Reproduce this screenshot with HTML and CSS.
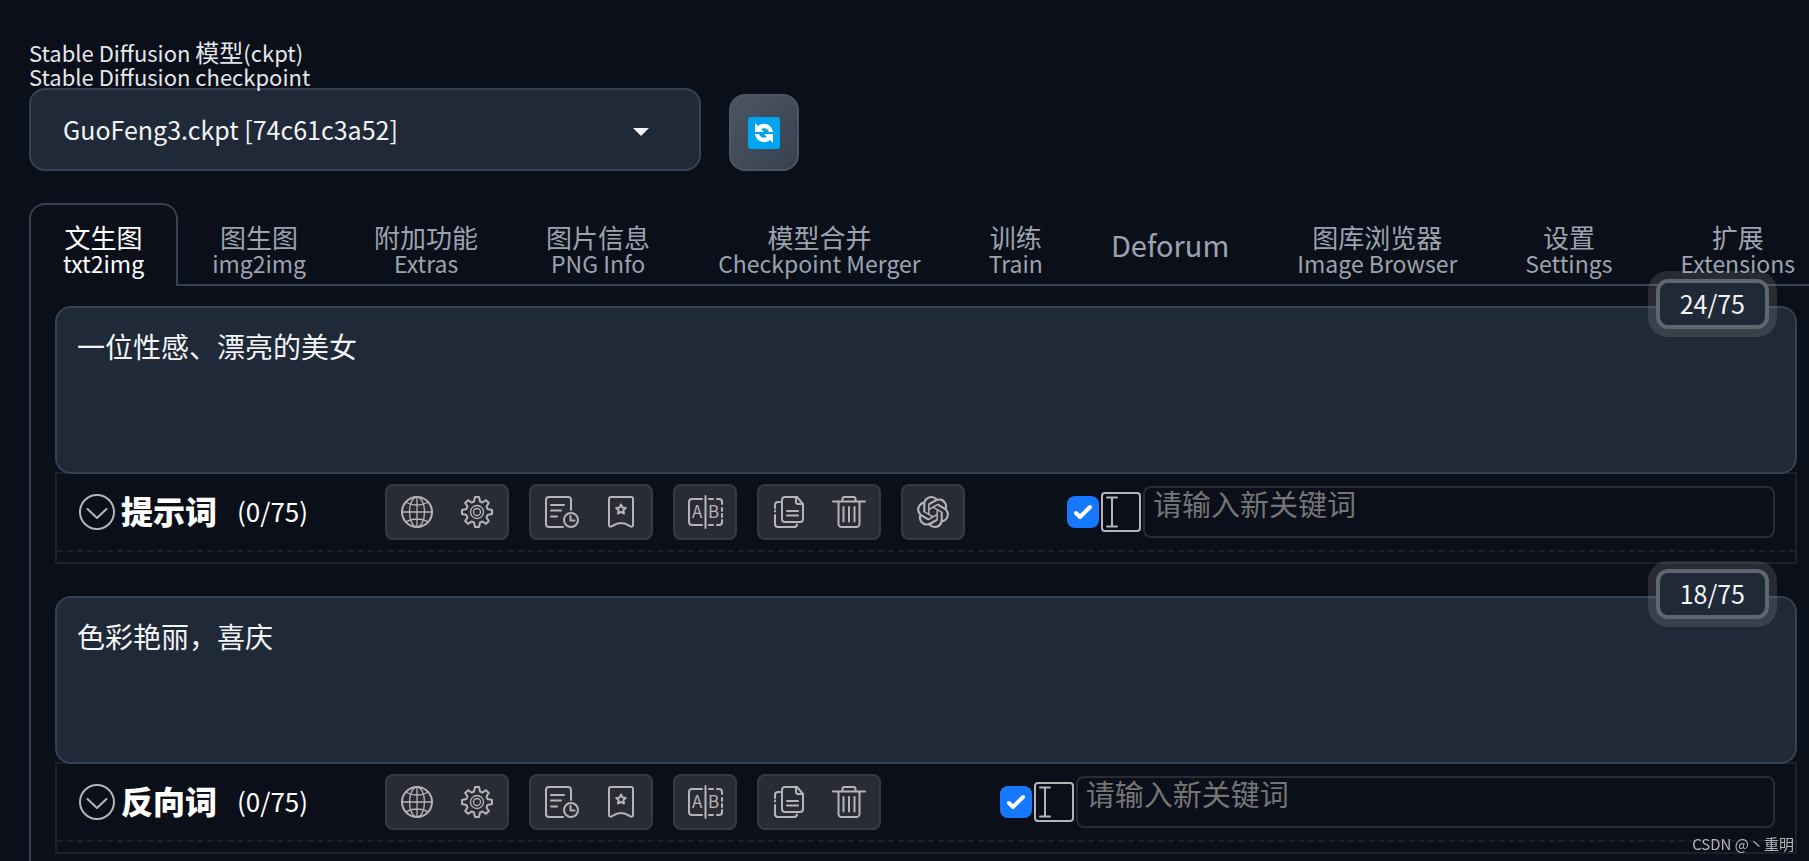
FILE: index.html
```html
<!DOCTYPE html>
<html lang="zh-CN">
<head>
    <meta charset="UTF-8">
    <title>Stable Diffusion</title>
    <link rel="stylesheet" href="styles.css">
</head>
<body>
    <!-- Icon sprite -->
    <svg class="sprite" aria-hidden="true">
        <symbol id="i-refresh" viewBox="0 0 32 32">
            <rect width="32" height="32" rx="3" fill="#00a4ef"/>
            <g fill="#fff">
                <path d="M7 6v9h9l-3-3c4-2 7 0 8 3h4C24 8 16 4 10 9z"/>
                <path d="M25 26v-9h-9l3 3c-4 2-7 0-8-3H7c1 7 9 11 15 6z"/>
            </g>
        </symbol>
        <symbol id="i-chevron" viewBox="0 0 36 36">
            <circle cx="18" cy="18" r="17"/>
            <path d="M8.500 15l9.500 9 9.500-9"/>
        </symbol>
        <symbol id="i-globe" viewBox="0 0 32 32">
            <circle cx="16" cy="16" r="15"/>
            <g stroke-width="1.300">
                <ellipse cx="16" cy="16" rx="7.500" ry="15"/>
                <path d="M16 1v30M1 16h30M5 6c6 4 16 4 22 0M5 26c6-4 16-4 22 0"/>
            </g>
        </symbol>
        <symbol id="i-gear" viewBox="0 0 32 32">
            <path d="M14 1h4l1 4.500 2.500 1L25 4.200 27.800 7l-2.300 3.500 1 2.500 4.500 1v4l-4.500 1-1 2.500 2.300 3.500-2.800 2.800-3.500-2.300-2.500 1-1 4.500h-4l-1-4.500-2.500-1L7 27.800 4.200 25l2.300-3.500-1-2.500L1 18v-4l4.500-1 1-2.500L4.200 7 7 4.200l3.500 2.300 2.500-1z"/>
            <g stroke-width="1.300"><circle cx="16" cy="16" r="6.500"/><circle cx="16" cy="16" r="3.500"/></g>
        </symbol>
        <symbol id="i-history" viewBox="0 0 32 32">
            <path d="M26 14V4a3 3 0 0 0-3-3H4a3 3 0 0 0-3 3v24a3 3 0 0 0 3 3h14M6 9h13M6 14.500h10M6 20.500h6"/>
            <circle cx="26" cy="24" r="7"/>
            <path d="M25.500 20v4.500h4"/>
        </symbol>
        <symbol id="i-bookmark" viewBox="0 0 32 32">
            <path d="M4 29V3a2 2 0 0 1 2-2h20a2 2 0 0 1 2 2v26c0 2-1.500 2-3 1.200-3-2-6-3.200-9-3.200s-6 1.200-9 3.200C5.500 31 4 31 4 29z"/>
            <path d="M16 8.500l1.500 3 3.300.4-2.400 2.300.6 3.300-3-1.600-3 1.600.6-3.300-2.400-2.300 3.300-.4z"/>
        </symbol>
        <symbol id="i-copy" viewBox="0 0 32 32">
            <path d="M24 1H12a3 3 0 0 0-3 3v19a3 3 0 0 0 3 3h15a3 3 0 0 0 3-3V8zM23 1v5a2 2 0 0 0 2 2h5M14 15h11M14 19.500h11"/>
            <path d="M7 6H5a3 3 0 0 0-3 3v3M2 14.500v1M2 19v9a3 3 0 0 0 3 3h16a3 3 0 0 0 3-2.500"/>
        </symbol>
        <symbol id="i-trash" viewBox="0 0 32 32">
            <path d="M0 5.500h32M9.500 5V3a2 2 0 0 1 2-2h9a2 2 0 0 1 2 2v2M5.500 6v22a3 3 0 0 0 3 3h15a3 3 0 0 0 3-3V6M10.500 11v14.500M16 11v14.500M21.500 11v14.500"/>
        </symbol>
        <symbol id="i-gpt" viewBox="0 0 24 24">
            <path class="solid" d="M22.2819 9.8211a5.9847 5.9847 0 0 0-.5157-4.9108 6.0462 6.0462 0 0 0-6.5098-2.9A6.0651 6.0651 0 0 0 4.9807 4.1818a5.9847 5.9847 0 0 0-3.9977 2.9 6.0462 6.0462 0 0 0 .7427 7.0966 5.98 5.98 0 0 0 .511 4.9107 6.051 6.051 0 0 0 6.5146 2.9001A5.9847 5.9847 0 0 0 13.2599 24a6.0557 6.0557 0 0 0 5.7718-4.2058 5.9894 5.9894 0 0 0 3.9977-2.9001 6.0557 6.0557 0 0 0-.7475-7.0729zm-9.022 12.6081a4.4755 4.4755 0 0 1-2.8764-1.0408l.1419-.0804 4.7783-2.7582a.7948.7948 0 0 0 .3927-.6813v-6.7369l2.02 1.1686a.071.071 0 0 1 .038.052v5.5826a4.504 4.504 0 0 1-4.4945 4.4944zm-9.6607-4.1254a4.4708 4.4708 0 0 1-.5346-3.0137l.142.0852 4.783 2.7582a.7712.7712 0 0 0 .7806 0l5.8428-3.3685v2.3324a.0804.0804 0 0 1-.0332.0615L9.74 19.9502a4.4992 4.4992 0 0 1-6.1408-1.6464zM2.3408 7.8956a4.485 4.485 0 0 1 2.3655-1.9728V11.6a.7664.7664 0 0 0 .3879.6765l5.8144 3.3543-2.0201 1.1685a.0757.0757 0 0 1-.071 0l-4.8303-2.7865A4.504 4.504 0 0 1 2.3408 7.872zm16.5963 3.8558L13.1038 8.364 15.1192 7.2a.0757.0757 0 0 1 .071 0l4.8303 2.7913a4.4944 4.4944 0 0 1-.6765 8.1042v-5.6772a.79.79 0 0 0-.407-.667zm2.0107-3.0231l-.142-.0852-4.7735-2.7818a.7759.7759 0 0 0-.7854 0L9.409 9.2297V6.8974a.0662.0662 0 0 1 .0284-.0615l4.8303-2.7866a4.4992 4.4992 0 0 1 6.6802 4.66zM8.3065 12.863l-2.02-1.1638a.0804.0804 0 0 1-.038-.0567V6.0742a4.4992 4.4992 0 0 1 7.3757-3.4537l-.142.0805L8.704 5.459a.7948.7948 0 0 0-.3927.6813zm1.0976-2.3654l2.602-1.4998 2.6069 1.4998v2.9994l-2.5974 1.4997-2.6067-1.4997Z"/>
        </symbol>
        <symbol id="i-compare" viewBox="0 0 32 32">
            <path d="M13 3H3a3 3 0 0 0-3 3v20a3 3 0 0 0 3 3h10M16.500 0v32M20 3h4M28 3h2a3 3 0 0 1 3 3v2M33 12v3M33 18v3M33 24v2a3 3 0 0 1-3 3h-2M24 29h-4"/>
        </symbol>
        <symbol id="i-cursor" viewBox="0 0 40 40">
            <rect x="1" y="1" width="38" height="38" rx="3"/>
            <path d="M6 5.500h10M6 34.500h10M11 5.500v29"/>
        </symbol>
    </svg>

    <!-- Model picker -->
    <div class="quicksettings">
        <div class="model">
            <label for="checkpoint">Stable Diffusion <span class="zh">模型</span>(ckpt)<br>Stable Diffusion checkpoint</label>
            <select id="checkpoint">
                <option>GuoFeng3.ckpt [74c61c3a52]</option>
            </select>
        </div>
        <button type="button" class="refresh" aria-label="刷新"><svg><use href="#i-refresh"/></svg></button>
    </div>

    <div class="tabs" role="tablist">
        <button type="button" class="tab active" role="tab" aria-selected="true">文生图<small>txt2img</small></button>
        <button type="button" class="tab" role="tab">图生图<small>img2img</small></button>
        <button type="button" class="tab" role="tab">附加功能<small>Extras</small></button>
        <button type="button" class="tab" role="tab">图片信息<small>PNG Info</small></button>
        <button type="button" class="tab" role="tab">模型合并<small>Checkpoint Merger</small></button>
        <button type="button" class="tab" role="tab">训练<small>Train</small></button>
        <button type="button" class="tab single" role="tab">Deforum</button>
        <button type="button" class="tab" role="tab">图库浏览器<small>Image Browser</small></button>
        <button type="button" class="tab" role="tab">设置<small>Settings</small></button>
        <button type="button" class="tab" role="tab">扩展<small>Extensions</small></button>
    </div>

    <main class="panel">
        <!-- Prompt -->
        <section class="prompt">
            <span class="token-counter">24/75</span>
            <textarea class="prompt-text" aria-label="提示词">一位性感、漂亮的美女</textarea>
            <div class="keywords">
                <div class="keywords-head">
                    <div class="title">
                        <button type="button" class="icon-btn fold" aria-label="折叠"><svg><use href="#i-chevron"/></svg></button>
                        <h2>提示词</h2>
                        <span class="count">(0/75)</span>
                    </div>
                    <div class="tools">
                        <div class="group">
                            <button type="button" class="icon-btn" aria-label="语言"><svg><use href="#i-globe"/></svg></button>
                            <button type="button" class="icon-btn" aria-label="设置"><svg><use href="#i-gear"/></svg></button>
                        </div>
                        <div class="group">
                            <button type="button" class="icon-btn" aria-label="历史"><svg><use href="#i-history"/></svg></button>
                            <button type="button" class="icon-btn" aria-label="收藏"><svg><use href="#i-bookmark"/></svg></button>
                        </div>
                        <div class="group">
                            <button type="button" class="icon-btn" aria-label="翻译">
                                <svg>
                                    <use href="#i-compare"/>
                                    <text x="3" y="22" class="ab-text">A</text>
                                    <text x="19" y="22" class="ab-text">B</text>
                                </svg>
                            </button>
                        </div>
                        <div class="group">
                            <button type="button" class="icon-btn" aria-label="复制"><svg><use href="#i-copy"/></svg></button>
                            <button type="button" class="icon-btn" aria-label="删除"><svg><use href="#i-trash"/></svg></button>
                        </div>
                        <div class="group">
                            <button type="button" class="icon-btn" aria-label="ChatGPT"><svg><use href="#i-gpt"/></svg></button>
                        </div>
                    </div>
                    <div class="spacer"></div>
                    <label class="append">
                        <input type="checkbox" aria-label="自动输入" checked>
                        <svg><use href="#i-cursor"/></svg>
                    </label>
                    <input type="text" class="new-keyword" placeholder="请输入新关键词" aria-label="新关键词">
                </div>
                <div class="keywords-list"></div>
            </div>
        </section>

        <!-- Negative prompt -->
        <section class="prompt">
            <span class="token-counter">18/75</span>
            <textarea class="prompt-text" aria-label="反向词">色彩艳丽，喜庆</textarea>
            <div class="keywords">
                <div class="keywords-head">
                    <div class="title">
                        <button type="button" class="icon-btn fold" aria-label="折叠"><svg><use href="#i-chevron"/></svg></button>
                        <h2>反向词</h2>
                        <span class="count">(0/75)</span>
                    </div>
                    <div class="tools">
                        <div class="group">
                            <button type="button" class="icon-btn" aria-label="语言"><svg><use href="#i-globe"/></svg></button>
                            <button type="button" class="icon-btn" aria-label="设置"><svg><use href="#i-gear"/></svg></button>
                        </div>
                        <div class="group">
                            <button type="button" class="icon-btn" aria-label="历史"><svg><use href="#i-history"/></svg></button>
                            <button type="button" class="icon-btn" aria-label="收藏"><svg><use href="#i-bookmark"/></svg></button>
                        </div>
                        <div class="group">
                            <button type="button" class="icon-btn" aria-label="翻译">
                                <svg>
                                    <use href="#i-compare"/>
                                    <text x="3" y="22" class="ab-text">A</text>
                                    <text x="19" y="22" class="ab-text">B</text>
                                </svg>
                            </button>
                        </div>
                        <div class="group">
                            <button type="button" class="icon-btn" aria-label="复制"><svg><use href="#i-copy"/></svg></button>
                            <button type="button" class="icon-btn" aria-label="删除"><svg><use href="#i-trash"/></svg></button>
                        </div>
                    </div>
                    <div class="spacer"></div>
                    <label class="append">
                        <input type="checkbox" aria-label="自动输入" checked>
                        <svg><use href="#i-cursor"/></svg>
                    </label>
                    <input type="text" class="new-keyword" placeholder="请输入新关键词" aria-label="新反向关键词">
                </div>
                <div class="keywords-list"></div>
            </div>
        </section>
    </main>

    <div class="watermark">CSDN @丶重明</div>
</body>
</html>
```
FILE: styles.css
```css
* {
    box-sizing: border-box;
}

body {
    display: flex;
    flex-direction: column;
    min-height: 100vh;
    margin: 0;
    padding: 40px 0 0 29px;
    overflow-x: hidden;
    background-color: #0b0f19;
    color: #f3f4f6;
    font-family: "Noto Sans CJK SC", sans-serif;
    font-size: 26px;
}

button,
input,
select,
textarea {
    margin: 0;
    font: inherit;
    color: inherit;
}

button {
    cursor: pointer;
}

svg {
    display: block;
    fill: none;
    stroke: #b5b5b5;
    stroke-width: 2;
    stroke-linecap: round;
    stroke-linejoin: round;
}

symbol {
    overflow: visible;
}

.sprite {
    position: absolute;
    width: 0;
    height: 0;
}

.solid {
    fill: #b5b5b5;
    stroke: none;
}

.ab-text {
    fill: #b5b5b5;
    stroke: none;
    font-size: 17px;
}

/* Model picker */
.quicksettings {
    display: flex;
    align-items: flex-end;
    gap: 28px;
    margin-bottom: 32px;
}

.model {
    width: 672px;
}

.model label {
    display: block;
    position: relative;
    color: #e5e7eb;
    font-size: 22px;
    line-height: 24px;
}

.model .zh {
    font-size: 24px;
    line-height: 1;
}

.model select {
    display: block;
    width: 100%;
    height: 83px;
    padding: 0 32px 2px;
    border: 2px solid #374151;
    border-radius: 16px;
    appearance: none;
    background: #1f2937 url("data:image/svg+xml,%3Csvg xmlns='http://www.w3.org/2000/svg' width='16' height='8'%3E%3Cpath d='M0 0h16L8 8z' fill='%23f3f4f6'/%3E%3C/svg%3E") no-repeat right 50px top 38px;
    font-size: 25px;
}

.refresh {
    display: flex;
    align-items: center;
    justify-content: center;
    width: 70px;
    height: 77px;
    padding: 0;
    border: 2px solid #4b5563;
    border-radius: 16px;
    background: linear-gradient(to bottom right, #4b5563, #374151);
}

.refresh svg {
    width: 32px;
    height: 32px;
    stroke: none;
}

/* Tabs */
.tabs {
    display: flex;
    border-bottom: 2px solid #374151;
}

.tab {
    flex: none;
    height: 83px;
    margin-bottom: -2px;
    padding: 9px 32px 0;
    border: 2px solid transparent;
    border-bottom: none;
    border-radius: 16px 16px 0 0;
    background: none;
    color: #9ca3af;
    line-height: 26px;
    white-space: nowrap;
}

.tab small {
    display: block;
    font-size: 23px;
}

.tab.single {
    padding: 0 32px 4px;
    font-size: 29px;
}

.tab.active {
    border-color: #374151;
    background-color: #0b0f19;
    color: #fff;
}

.panel {
    flex: 1;
    padding: 20px 12px 0 24px;
    border-left: 2px solid #374151;
}

/* Prompt blocks */
.prompt {
    position: relative;
}

.prompt + .prompt {
    margin-top: 32px;
}

.prompt-text {
    display: block;
    position: relative;
    width: 100%;
    height: 168px;
    padding: 18px 20px;
    border: 2px solid #374151;
    border-radius: 16px;
    background-color: #1f2937;
    font-size: 28px;
    line-height: 40px;
    resize: none;
}

.token-counter {
    position: absolute;
    top: -27px;
    right: 28px;
    z-index: 1;
    padding: 0 20px 2px;
    border: 4px solid #5f6670;
    border-radius: 12px;
    background-color: #1f2937;
    box-shadow: 0 0 0 8px rgba(192, 192, 192, 0.16);
    font-size: 25px;
    line-height: 40px;
}

.keywords {
    margin-top: -2px;
    border: 2px solid #1d2029;
}

.keywords-head {
    display: flex;
    align-items: center;
    padding: 10px 20px 10px 22px;
}

.keywords-list {
    height: 12px;
    border-top: 2px dashed #1d2029;
}

.title {
    display: flex;
    align-items: center;
    width: 306px;
    color: #fff;
    line-height: 36px;
}

.title h2 {
    margin: 0 20px 0 6px;
    padding-bottom: 4px;
    font-size: 32px;
    font-weight: 900;
}

.count {
    padding-bottom: 2px;
}

.tools {
    display: flex;
    gap: 20px;
}

.group {
    display: flex;
    gap: 28px;
    padding: 10px 14px;
    border: 2px solid #373944;
    border-radius: 8px;
    background-color: #2a2c35;
}

.icon-btn {
    padding: 0;
    border: none;
    background: none;
}

.icon-btn svg {
    width: 32px;
    height: 32px;
    overflow: visible;
}

.fold svg {
    width: 36px;
    height: 36px;
}

.spacer {
    flex: 1;
}

.append {
    display: flex;
    align-items: center;
    gap: 2px;
    margin-right: 2px;
}

.append input {
    width: 32px;
    height: 32px;
    border-radius: 8px;
    appearance: none;
    background-color: #374151;
}

.append input:checked {
    background: #1677ff url("data:image/svg+xml,%3Csvg xmlns='http://www.w3.org/2000/svg' width='32' height='32'%3E%3Cpath d='M9 17l4 4 10-10' fill='none' stroke='white' stroke-width='4' stroke-linecap='round' stroke-linejoin='round'/%3E%3C/svg%3E");
}

.append svg {
    width: 40px;
    height: 40px;
}

.new-keyword {
    flex: 4 1 224px;
    min-width: 0;
    height: 52px;
    padding: 0 8px 18px;
    border: 2px solid #2a2c35;
    border-radius: 8px;
    background: none;
    font-size: 29px;
}

.new-keyword::placeholder {
    color: #757575;
}

.watermark {
    position: fixed;
    right: 15px;
    bottom: 8px;
    color: #b5b5b5;
    font-size: 15px;
    line-height: 18px;
}
```
